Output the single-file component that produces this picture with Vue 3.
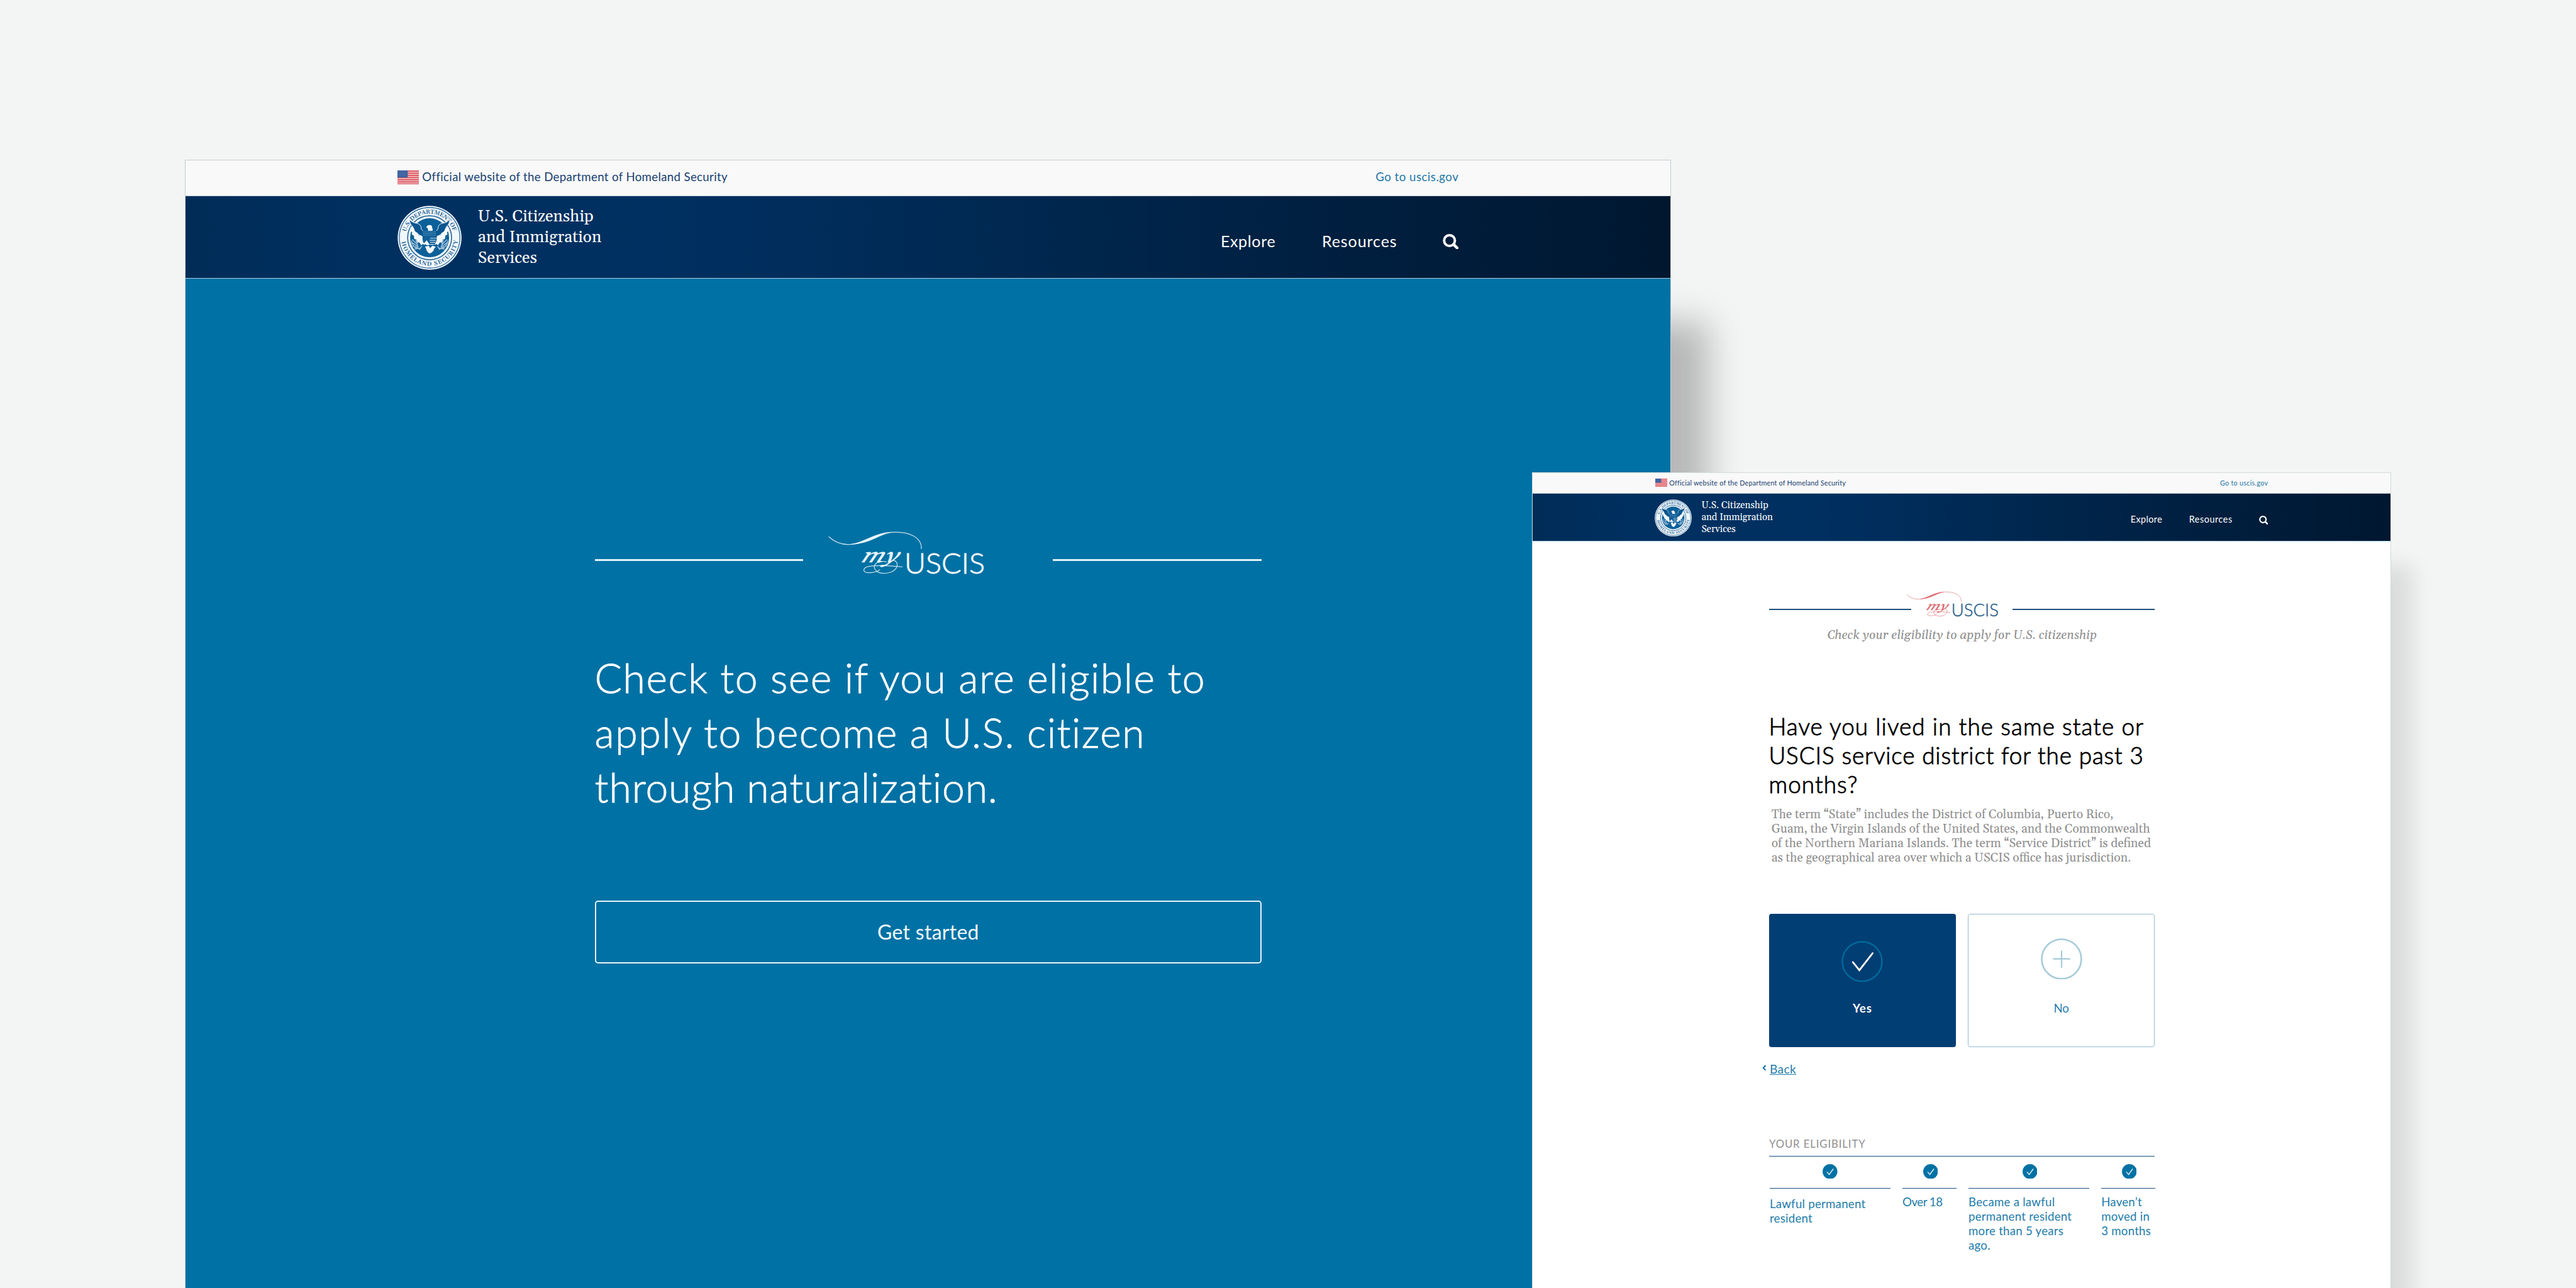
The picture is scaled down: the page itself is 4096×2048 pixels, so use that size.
<script setup>
import { h } from 'vue'

const SealIcon = () =>
  h('svg', { class: 'seal', viewBox: '-155 -155 310 310', width: 104, height: 104 }, [
    h('defs', [
      h('path', { id: 'seal-top', d: 'M-114,-26 A117,117 0 0 1 114,-26' }),
      h('path', { id: 'seal-bottom', d: 'M-136,14 A137,137 0 0 0 136,14' })
    ]),
    h('circle', { r: 154, fill: '#f1f7fb' }),
    h('circle', { r: 146, fill: 'none', stroke: '#2a6a9c', 'stroke-width': 4 }),
    h('circle', { r: 106, fill: 'none', stroke: '#2a6a9c', 'stroke-width': 5 }),
    h('circle', { r: 94, fill: '#0c6099' }),
    h('g', { fill: '#1d5f93', 'font-family': "'Gelasio','Liberation Serif',serif", 'font-size': 28, 'font-weight': 600 }, [
      h('text', { textLength: 306 }, [h('textPath', { href: '#seal-top', startOffset: 2, textLength: 306 }, 'U.S. DEPARTMENT OF')]),
      h('text', { textLength: 392 }, [h('textPath', { href: '#seal-bottom', startOffset: 5, textLength: 392 }, 'HOMELAND SECURITY')])
    ]),
    ...[1, -1].map((s) =>
      h('g', { transform: `scale(${s},1)` }, [
        h('path', { d: 'M-98,-90 Q-84,-72 -62,-70 Q-40,-66 -40,-42 Q-34,-30 -22,-30 L-26,0 L-60,-20 Q-78,-34 -80,-52 Q-96,-66 -98,-90Z', fill: '#0c5690', stroke: '#f1f7fb', 'stroke-width': 3 }),
        h('path', { d: 'M-92,-52 L-76,-46 L-70,-30 L-58,-24 L-52,-12 L-38,-10 L-30,6 L-24,34 L-34,30 L-40,36 L-50,22 L-58,24 L-64,8 L-74,6 L-76,-10 L-86,-16 L-84,-28 L-94,-34Z', fill: '#f4f9fc' }),
        h('path', { d: 'M-84,8 L-62,30 M-86,22 L-56,44 M-82,38 L-50,52 M-72,54 L-42,50 M-66,8 L-56,46 M-50,58 L-38,40 M-88,14 Q-84,42 -60,52', fill: 'none', stroke: '#9dbfd9', 'stroke-width': 5 })
      ])
    ),
    h('path', { d: 'M-16,-50 Q-14,-62 2,-62 Q14,-60 12,-48 Q18,-42 14,-34 L-8,-34 Q-4,-44 -16,-50Z', fill: '#f4f9fc' }),
    h('path', { d: 'M-34,-34 H34 V10 Q30,36 0,46 Q-30,36 -34,10Z', fill: '#115f98' }),
    h('path', { d: 'M-30,-28 H30 M-30,-20 H30 M-30,-12 H30', fill: 'none', stroke: '#7fabcb', 'stroke-width': 2.5, 'stroke-dasharray': '5 3' }),
    h('path', { d: 'M2,2 H32 M0,12 H30 M2,22 H28 M0,32 H22', fill: 'none', stroke: '#c6dceb', 'stroke-width': 3.5 }),
    h('path', { d: 'M-30,30 L-14,12 L0,32 L-8,36 Z M-22,42 L-4,38 L2,50 L14,38 L30,44 L22,52 Q20,68 0,76 Q-16,66 -16,54Z', fill: '#f4f9fc' })
  ])

const FlagIcon = () =>
  h('svg', { class: 'flag', viewBox: '0 0 35 23', width: 35, height: 23 }, [
    h('rect', { width: 35, height: 23, fill: '#f6c3c6' }),
    ...[0, 1, 2, 3, 4, 5, 6].map((i) => h('rect', { y: i * 3.53, width: 35, height: 1.9, fill: '#d9545c' })),
    h('rect', { width: 16.5, height: 11.5, fill: '#3b5f9f' }),
    h('path', { d: 'M1.5,2.5H15M1.5,5.5H15M1.5,8.5H15', stroke: '#7f97c4', 'stroke-width': 0.8, 'stroke-dasharray': '1.2 1.6' })
  ])

const BrandLogo = (p) =>
  h('svg', { class: 'logo', viewBox: '115 55 785 265', width: (p.width * 785) / 765, height: (p.width * 265) / 765, fill: 'none', stroke: p.script, 'stroke-linecap': 'round' }, [
    h('path', { d: 'M121,84 C150,112 185,124 228,121 C310,116 345,66 425,62 C515,56 572,90 570,142', 'stroke-width': 3.8, opacity: 0.85 }),
    h('path', { d: 'M232,120 C300,108 340,66 425,62 C365,72 325,116 232,120Z', fill: p.script, 'stroke-width': 2 }),
    h('text', { transform: 'translate(274 209) skewX(-26)', fill: p.script, stroke: p.script, 'stroke-width': 1.5, 'font-family': "'Gelasio','Liberation Serif',serif", 'font-style': 'italic', 'font-size': 100, textLength: 178, lengthAdjust: 'spacingAndGlyphs' }, 'my'),
    h('path', { d: 'M476,230 C420,224 350,222 315,228 C285,234 282,256 310,258 C330,259 350,256 368,244 M400,206 C352,196 325,226 352,250 C378,270 430,262 448,236 C458,216 450,200 432,198', 'stroke-width': 3.8, opacity: 0.85 }),
    h('text', { x: 487, y: 263, fill: p.text, stroke: p.text, 'stroke-width': 2.5, 'font-family': "'Lato','Liberation Sans',sans-serif", 'font-weight': 300, 'font-size': 140, textLength: 391, lengthAdjust: 'spacingAndGlyphs' }, 'USCIS')
  ])
BrandLogo.props = ['width', 'script', 'text']

const SiteHeader = () =>
  h('header', { class: 'site-header' }, [
    h('div', { class: 'official' }, [
      h(FlagIcon),
      h('span', { class: 'official-text' }, 'Official website of the Department of Homeland Security'),
      h('a', { class: 'official-link' }, 'Go to uscis.gov')
    ]),
    h('div', { class: 'masthead' }, [
      h(SealIcon),
      h('div', { class: 'agency' }, [h('div', 'U.S. Citizenship'), h('div', 'and Immigration'), h('div', 'Services')]),
      h('nav', { class: 'menu' }, [
        h('a', { class: 'explore' }, 'Explore'),
        h('a', { class: 'resources' }, 'Resources'),
        h('svg', { class: 'search', viewBox: '0 0 26 25', width: 26, height: 25, fill: 'none', stroke: '#fff' }, [
          h('circle', { cx: 11, cy: 10.7, r: 8.7, 'stroke-width': 4 }),
          h('path', { d: 'M17.5,17 L23.3,22.6', 'stroke-width': 4.6, 'stroke-linecap': 'round' })
        ])
      ])
    ])
  ])

const steps = [
  { lines: ['Lawful permanent', 'resident'], cls: 'first' },
  { lines: ['Over 18'], cls: 'tight' },
  { lines: ['Became a lawful', 'permanent resident', 'more than 5 years', 'ago.'], cls: '' },
  { lines: ['Haven’t', 'moved in', '3 months'], cls: '' }
]
</script>

<template>
  <div class="page">
    <section class="window start">
      <SiteHeader />
      <main class="start-body">
        <div class="brand">
          <i class="rule"></i>
          <BrandLogo :width="255" script="#e9f5fa" text="#f4fafd" />
          <i class="rule right"></i>
        </div>
        <h1>
          <span class="l1">Check to see if you are eligible to</span>
          <span class="l2">apply to become a U.S. citizen</span>
          <span class="l3">through naturalization.</span>
        </h1>
        <button class="get-started">Get started</button>
      </main>
    </section>

    <section class="window question">
      <SiteHeader />
      <main class="question-body">
        <div class="brand">
          <i class="rule"></i>
          <BrandLogo :width="150" script="#dd6a70" text="#2c5f8d" />
          <i class="rule right"></i>
        </div>
        <p class="tagline">Check your eligibility to apply for U.S. citizenship</p>
        <h2>
          <span class="l1">Have you lived in the same state or</span>
          <span class="l2">USCIS service district for the past 3</span>
          <span class="l3">months?</span>
        </h2>
        <p class="term">
          The term “State” includes the District of Columbia, Puerto Rico,<br />
          Guam, the Virgin Islands of the United States, and the Commonwealth<br />
          of the Northern Mariana Islands. The term “Service District” is defined<br />
          as the geographical area over which a USCIS office has jurisdiction.
        </p>
        <div class="answers">
          <button class="answer yes">
            <svg viewBox="0 0 67 67" width="67" height="67" fill="none">
              <circle cx="33.5" cy="33.5" r="32" stroke="#006b9c" stroke-width="2.4" />
              <path d="M18.5,34.5 L29,47.5 L50.5,20" stroke="#fff" stroke-width="2.8" stroke-linecap="round" />
            </svg>
            <span>Yes</span>
          </button>
          <button class="answer no">
            <svg viewBox="0 0 67 67" width="67" height="67" fill="none" stroke="#a5cad9">
              <circle cx="33.5" cy="33.5" r="32" stroke-width="2.6" />
              <path d="M19.8,33.2 H47.5 M33.6,19.8 V47.6" stroke-width="2.2" />
            </svg>
            <span>No</span>
          </button>
        </div>
        <div class="back">
          <svg viewBox="0 0 7 10" width="7" height="10" fill="none" stroke="#0071a4" stroke-width="2">
            <path d="M5.6,1 L1.8,5 L5.6,9" />
          </svg>
          <a>Back</a>
        </div>
        <h3>YOUR ELIGIBILITY</h3>
        <div class="steps">
          <div v-for="s in steps" :key="s.lines[0]" class="step" :class="s.cls">
            <div class="step-icon">
              <svg viewBox="0 0 24 24" width="24" height="24" fill="none">
                <circle cx="12" cy="12" r="12" fill="#0071a4" />
                <path d="M7,12.6 L10.8,16.8 L17.4,7.6" stroke="#d8ebf3" stroke-width="1.5" />
              </svg>
            </div>
            <div class="step-text">
              <div v-for="l in s.lines" :key="l">{{ l }}</div>
            </div>
          </div>
        </div>
      </main>
    </section>
  </div>
</template>

<style>
html,
body {
  margin: 0;
  background: #f3f5f4;
  overflow: hidden;
}
.site-header .official {
  box-sizing: border-box;
  height: 58.5px;
  padding: 0 343px 2px 343px;
  display: flex;
  align-items: center;
  background: #f9f9f9;
  border-bottom: 1.5px solid #b9c9d4;
  font-size: 19px;
  line-height: 24px;
  white-space: nowrap;
}
.site-header .official-text {
  margin-left: 5px;
  letter-spacing: 0.35px;
  color: #17406f;
}
.site-header .official-link {
  margin-left: auto;
  letter-spacing: 0.5px;
  color: #1f77a8;
}
.site-header .masthead {
  box-sizing: border-box;
  height: 133.5px;
  padding: 15.5px 343px 0 342.5px;
  display: flex;
  align-items: flex-start;
  background: linear-gradient(90deg, #002c57 0%, #003060 12%, #003061 32%, #002a55 50%, #002245 70%, #001a36 92%, #00172f 100%);
  border-bottom: 2px solid #a9cde0;
  color: #fff;
}
.site-header .agency {
  margin: 2.2px 0 0 26.5px;
  font: 26.4px/33.2px 'Gelasio', 'Liberation Serif', serif;
  letter-spacing: 0.05px;
  white-space: nowrap;
}
.site-header .menu {
  margin: 37.5px 0 0 auto;
  display: flex;
  align-items: center;
  font-size: 25.5px;
  line-height: 40px;
}
.site-header .explore {
  letter-spacing: 0.65px;
  margin-right: 75px;
}
.site-header .resources {
  letter-spacing: 0.9px;
  margin-right: 73.5px;
}
</style>

<style scoped>
.page {
  position: relative;
  width: 4167px;
  height: 2083.4px;
  overflow: hidden;
  zoom: 0.98296;
  background: #f3f5f4;
  font-family: 'Lato', 'Liberation Sans', sans-serif;
}
.window {
  position: absolute;
  box-sizing: border-box;
}
.start {
  left: 299px;
  top: 258px;
  width: 2404.5px;
  height: 2100px;
  background: #0071a4;
  border: 1px solid #c4cdd0;
  box-shadow: 60px 262px 52px rgba(0, 0, 0, 0.25);
}
.question {
  left: 2478px;
  top: 764px;
  width: 1390px;
  height: 1600px;
  background: #fff;
  border: 1px solid #d3dadb;
  border-top-width: 1.5px;
  box-shadow: 36px 151px 32px rgba(0, 0, 0, 0.1);
}
.question .site-header {
  zoom: 0.5778;
}
h1,
h2,
h3,
p {
  margin: 0;
  font-weight: 400;
}
h1 span,
h2 span {
  display: block;
  white-space: nowrap;
}
button {
  box-sizing: border-box;
  padding: 0;
  font-family: inherit;
  background: none;
}
.brand {
  display: flex;
  align-items: flex-start;
}
.right {
  margin-left: auto;
}

.start-body {
  width: 1079px;
  margin-left: 662px;
  padding-top: 407.5px;
}
.start-body .brand {
  height: 71.7px;
}
.start-body .rule {
  width: 337.5px;
  height: 2.6px;
  margin-top: 46px;
  background: #e3f3f9;
}
.start-body .logo {
  margin-left: 39px;
}
h1 {
  margin-top: 121.5px;
  font-size: 65.5px;
  line-height: 88.7px;
  font-weight: 300;
  color: #fff;
  -webkit-text-stroke: 0.8px #fff;
}
h1 .l1 {
  letter-spacing: 1.48px;
}
h1 .l2 {
  letter-spacing: 1.5px;
}
h1 .l3 {
  letter-spacing: 0.8px;
}
.get-started {
  display: block;
  width: 1079px;
  height: 102.5px;
  margin-top: 138.6px;
  padding-bottom: 1px;
  border: 2.6px solid #e8f6fb;
  border-radius: 5px;
  font-size: 32.5px;
  letter-spacing: 0.3px;
  color: #f4fafd;
}

.question-body {
  width: 624px;
  margin-left: 382.7px;
  padding-top: 80px;
}
.question-body .brand {
  height: 42px;
}
.question-body .rule {
  width: 229.8px;
  height: 2px;
  margin-top: 28.8px;
  background: #1f4f7c;
}
.question-body .logo {
  margin-left: -8px;
}
.tagline {
  margin-top: 18px;
  font: italic 19.7px/24px 'Gelasio', 'Liberation Serif', serif;
  text-align: center;
  color: #8e8e8e;
}
h2 {
  margin: 111.7px 0 0 -0.5px;
  font-size: 37.5px;
  line-height: 47px;
  font-weight: 300;
  color: #000;
  -webkit-text-stroke: 0.9px #000;
}
h2 .l1 {
  letter-spacing: 1.12px;
}
h2 .l2 {
  letter-spacing: 0.88px;
}
h2 .l3 {
  letter-spacing: 1.1px;
}
.term {
  margin: 13.4px 0 0 3.8px;
  font: 19.7px/23.4px 'Gelasio', 'Liberation Serif', serif;
  color: #8e8e8e;
  white-space: nowrap;
}
.answers {
  display: flex;
  gap: 19.8px;
  margin-top: 78.3px;
}
.answer {
  width: 302px;
  height: 215.5px;
  display: flex;
  flex-direction: column;
  align-items: center;
  border-radius: 4px;
  font-size: 19px;
  line-height: 24px;
}
.yes {
  padding-top: 44px;
  background: #003e73;
  border: 0;
  color: #fff;
  font-weight: 700;
}
.yes span {
  margin-top: 31px;
  letter-spacing: 0.9px;
}
.no {
  padding-top: 38.5px;
  border: 1.5px solid #93bccf;
  color: #1f7dab;
}
.no span {
  margin-top: 35.4px;
}
.back {
  display: flex;
  align-items: center;
  gap: 5.5px;
  margin: 23.5px 0 0 -11.5px;
  font-size: 19.5px;
  line-height: 24px;
  color: #1f7dab;
}
.back svg {
  margin-bottom: 4px;
}
.back a {
  text-decoration: underline;
  letter-spacing: 0.4px;
}
h3 {
  margin-top: 98px;
  padding-bottom: 6.6px;
  border-bottom: 1.5px solid #164f7c;
  font-size: 17px;
  line-height: 24px;
  letter-spacing: 0.93px;
  color: #8e8e8e;
}
.steps {
  display: grid;
  grid-template-columns: 195.5px 87.5px 195.5px 87.5px;
  column-gap: 19.3px;
  margin: 12.2px 0 0 1px;
}
.step {
  font-size: 19px;
  line-height: 23.4px;
  letter-spacing: 0.25px;
  color: #1f7dab;
}
.step-icon {
  display: flex;
  justify-content: center;
  padding: 0 0 15.5px 3px;
  border-bottom: 1.5px solid #164f7c;
}
.step-text {
  margin-top: 9.8px;
  white-space: nowrap;
}
.first .step-icon {
  padding-left: 0;
}
.first .step-text {
  margin-top: 12.5px;
}
.tight {
  letter-spacing: -0.5px;
}
</style>
